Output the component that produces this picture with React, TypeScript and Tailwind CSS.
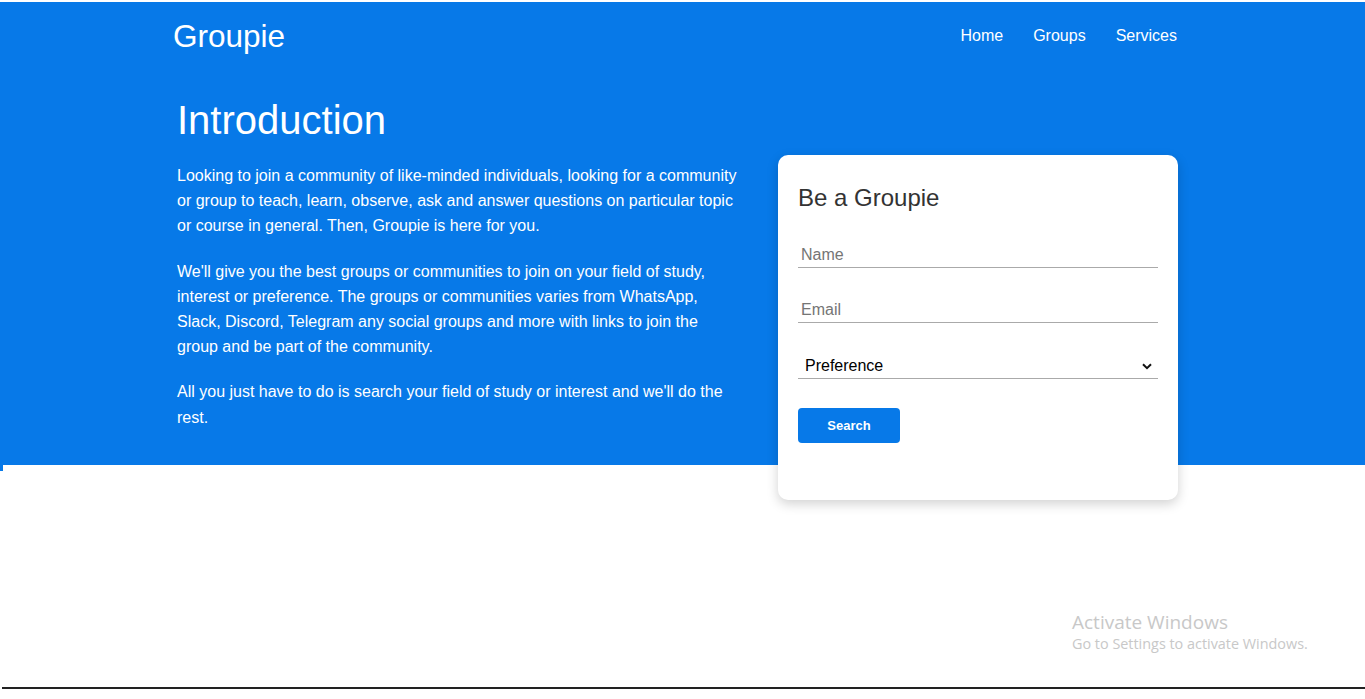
import React from 'react';

export default function App() {
  const paragraphs = [
    'Looking to join a community of like-minded individuals, looking for a community or group to teach, learn, observe, ask and answer questions on particular topic or course in general. Then, Groupie is here for you.',
    "We'll give you the best groups or communities to join on your field of study, interest or preference. The groups or communities varies from WhatsApp, Slack, Discord, Telegram any social groups and more with links to join the group and be part of the community.",
    "All you just have to do is search your field of study or interest and we'll do the rest.",
  ];

  return (
    <div className="min-h-[699px] bg-white pt-[2px] font-['Liberation_Sans',Arial,sans-serif]">
      <section className="h-[463px] bg-[#0779e8] text-white">
        <div className="mx-auto w-[1019px] pr-[15px]">
          {/* Header */}
          <header className="flex h-[70px] items-center justify-between">
            <a href="#" className="text-[31.5px] leading-none">Groupie</a>
            <nav className="flex items-center gap-[30px] text-[16px] -mt-[2px]">
              <a href="#">Home</a>
              <a href="#">Groups</a>
              <a href="#">Services</a>
            </nav>
          </header>

          <div className="flex items-start justify-between pl-[4px]">
            {/* Intro */}
            <div className="mt-[25px] w-[566px]">
              <h1 className="text-[40px] leading-[46px]">Introduction</h1>
              <div className="mt-[20px] flex flex-col gap-[20px] text-[16px] leading-[25.2px]">
                {paragraphs.map((p, i) => (
                  <p key={i}>{p}</p>
                ))}
              </div>
            </div>

            {/* Form card */}
            <div className="relative z-10 mt-[83px] mr-[-1px] w-[400px] rounded-[10px] bg-white px-5 pt-[29px] pb-[57px] text-[#333] shadow-[0_4px_12px_rgba(0,0,0,0.18)]">
              <h2 className="text-[24px] leading-[28px]">Be a Groupie</h2>
              <form className="mt-[25px] flex flex-col">
                <input
                  type="text"
                  placeholder="Name"
                  className="h-[31px] border-b border-[#aaa] px-[3px] pt-[6px] text-[16px] outline-none placeholder:text-[#757575]"
                />
                <input
                  type="email"
                  placeholder="Email"
                  className="mt-[24px] h-[31px] border-b border-[#aaa] px-[3px] pt-[6px] text-[16px] outline-none placeholder:text-[#757575]"
                />
                <div className="relative mt-[25px]">
                  <select className="h-[31px] w-full appearance-none border-b border-[#aaa] bg-white pl-[7px] pt-[6px] text-[16px] text-black outline-none">
                    <option>Preference</option>
                    <option>Technology</option>
                    <option>Design</option>
                  </select>
                  <svg
                    className="pointer-events-none absolute right-[6px] top-[15px]"
                    width="10"
                    height="7"
                    viewBox="0 0 10 7"
                    fill="none"
                  >
                    <path d="M1 1.2l4 4 4-4" stroke="#111" strokeWidth="2" />
                  </svg>
                </div>
                <button
                  type="button"
                  className="mt-[29px] h-[35px] w-[102px] rounded-[4px] bg-[#0779e8] text-[13px] font-bold text-white"
                >
                  Search
                </button>
              </form>
            </div>
          </div>
        </div>
      </section>

      <div className="h-[6px] w-[3px] bg-[#0779e8]" />

      <div className="relative h-[216px]">
        <div className="absolute left-[1072px] top-[139px] font-['Open_Sans',sans-serif] text-[#c8c8c8]">
          <div className="text-[19px] leading-[24px]">Activate Windows</div>
          <div className="text-[14.4px] leading-[20px]">Go to Settings to activate Windows.</div>
        </div>
      </div>

      <div className="ml-[2px] h-[2px] bg-[#222]" />
    </div>
  );
}
